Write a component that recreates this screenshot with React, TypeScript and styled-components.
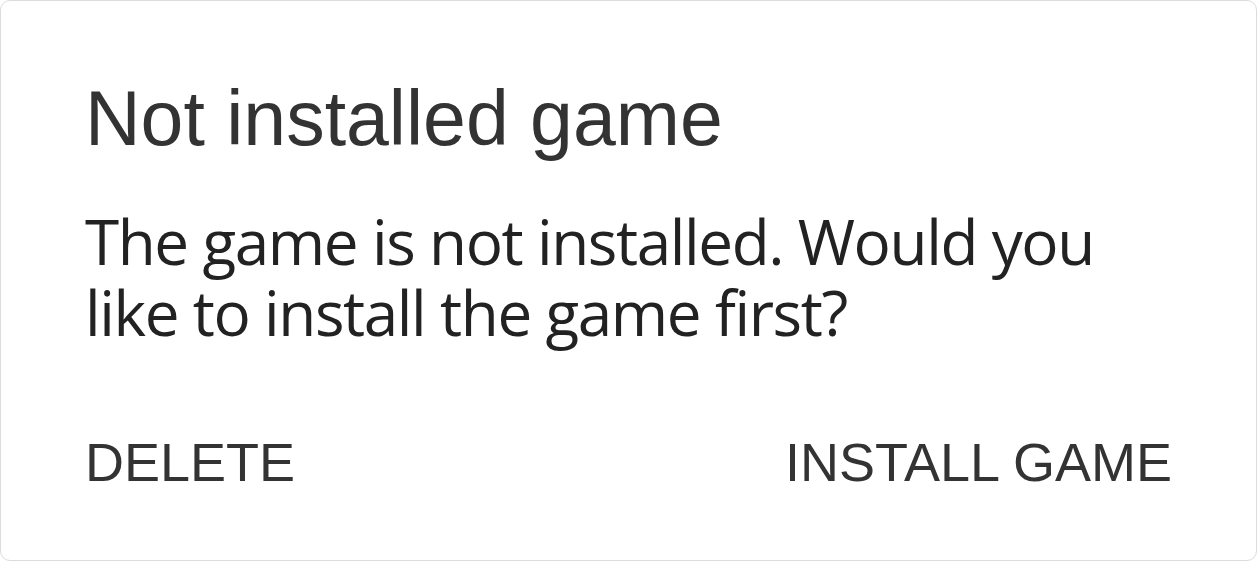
import React from "react";
import styled, { createGlobalStyle } from "styled-components";

const Global = createGlobalStyle`
  html, body { margin: 0; padding: 0; background: #ffffff; }
  body { width: 1258px; height: 562px; overflow: hidden; }
`;

const Card = styled.div`
  box-sizing: border-box;
  width: 1257px;
  height: 561px;
  background: #ffffff;
  border: 1px solid #dcdcdc;
  border-radius: 10px;
  padding: 73px 84px 0 84px;
  display: flex;
  flex-direction: column;
`;

const Title = styled.h1`
  margin: 0;
  font-family: "Liberation Sans", Arial, sans-serif;
  font-weight: 400;
  font-size: 77px;
  line-height: 88px;
  color: #333333;
`;

const Body = styled.p`
  margin: 44px 0 0 0;
  font-family: "Open Sans", "Noto Sans", sans-serif;
  font-size: 62px;
  letter-spacing: -1.4px;
  line-height: 71px;
  color: #222222;
  max-width: 1060px;
`;

const Actions = styled.div`
  margin-top: 84px;
  display: flex;
  justify-content: space-between;
  align-items: center;
`;

const ActionButton = styled.button`
  border: none;
  background: none;
  padding: 0;
  font-family: "Liberation Sans", Arial, sans-serif;
  font-size: 54px;
  line-height: 60px;
  color: #333333;
  text-transform: uppercase;
  cursor: pointer;
`;

export default function App() {
  return (
    <>
      <Global />
      <Card>
        <Title>Not installed game</Title>
        <Body>The game is not installed. Would you like to install the game first?</Body>
        <Actions>
          <ActionButton>Delete</ActionButton>
          <ActionButton>Install game</ActionButton>
        </Actions>
      </Card>
    </>
  );
}
